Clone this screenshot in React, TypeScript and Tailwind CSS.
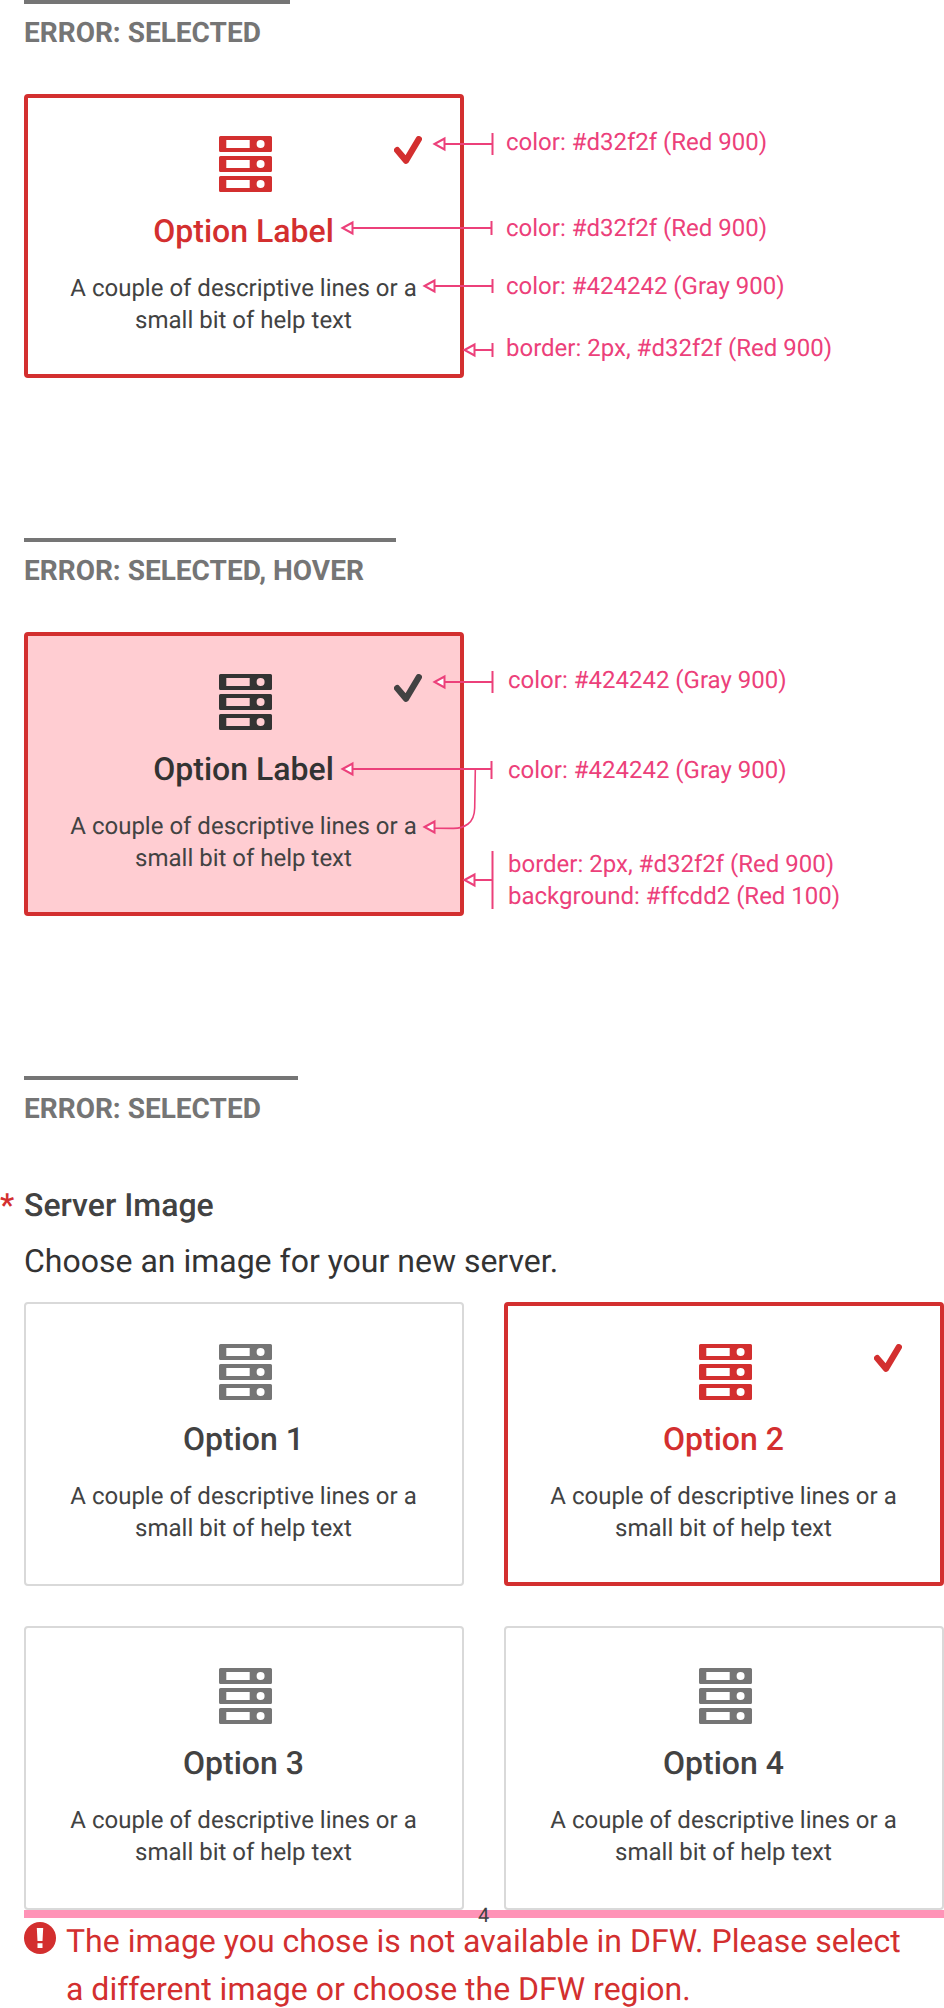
import React from "react";

type Tone = "idle" | "error" | "errorHover";

const PINK = "#ec407a";

const cardTone: Record<Tone, string> = {
  idle: "border-2 border-[#d9d9d9] bg-white p-[2px]",
  error: "border-4 border-[#d32f2f] bg-white",
  errorHover: "border-4 border-[#d32f2f] bg-[#ffcdd2]",
};
const iconTone: Record<Tone, string> = {
  idle: "text-[#757575]",
  error: "text-[#d32f2f]",
  errorHover: "text-[#333333]",
};
const labelTone: Record<Tone, string> = {
  idle: "text-[#424242]",
  error: "text-[#d32f2f]",
  errorHover: "text-[#333333]",
};
const checkTone: Record<Tone, string> = {
  idle: "hidden",
  error: "text-[#d32f2f]",
  errorHover: "text-[#424242]",
};

function ServerIcon({ className }: { className: string }) {
  return (
    <svg width="56" height="56" viewBox="0 0 56 56" fill="currentColor" fillRule="evenodd" className={className}>
      {[0, 20, 40].map((y) => (
        <path
          key={y}
          transform={`translate(0 ${y})`}
          d="M4.5 0H54.5a1.5 1.5 0 0 1 1.5 1.5V14.5a1.5 1.5 0 0 1-1.5 1.5H4.5A1.5 1.5 0 0 1 3 14.5V1.5A1.5 1.5 0 0 1 4.5 0ZM10.3 4V12H33.7V4ZM44.6 4a4 4 0 1 0 0 8a4 4 0 1 0 0-8Z"
        />
      ))}
    </svg>
  );
}

function CheckIcon({ className }: { className: string }) {
  return (
    <svg width="28" height="28" viewBox="0 0 28 28" fill="none" className={className}>
      <path d="M3.2 14.2L12 24.6L24.8 3.2" stroke="currentColor" strokeWidth="6.3" strokeLinecap="round" strokeLinejoin="round" />
    </svg>
  );
}

function OptionCard({ label, tone }: { label: string; tone: Tone }) {
  return (
    <div className={`relative h-[284px] w-[440px] shrink-0 rounded-[4px] ${cardTone[tone]}`}>
      <div className="flex flex-col items-center pt-[38px]">
        <ServerIcon className={iconTone[tone]} />
        <div className={`mt-[19px] pr-px text-[32px] leading-[40px] font-medium ${labelTone[tone]}`}>{label}</div>
        <p className="mt-[21px] pr-px text-center text-2xl leading-8 text-[#424242]">
          A couple of descriptive lines or a
          <br />
          small bit of help text
        </p>
      </div>
      <CheckIcon className={`absolute top-[38px] right-[38px] ${checkTone[tone]}`} />
    </div>
  );
}

function Heading({ text, rule }: { text: string; rule: string }) {
  return (
    <div>
      <div className={`h-1 bg-[#757575] ${rule}`} />
      <h2 className="mt-[13px] text-[28px] leading-8 font-bold text-[#757575]">{text}</h2>
    </div>
  );
}

/* Arrow pointing left at x, with a stem to `end` and a bar from top to bottom. */
function Arrow({ x, y, end, top, bottom }: { x: number; y: number; end: number; top: number; bottom: number }) {
  return (
    <g>
      <path d={`M${x + 12} ${y}H${end}M${end} ${top}V${bottom}`} />
      <path d={`M${x + 2} ${y}L${x + 12} ${y - 5.5}V${y + 5.5}Z`} fill="#fff" />
    </g>
  );
}

function Overlay({ children }: { children: React.ReactNode }) {
  return (
    <svg
      width="520"
      height="284"
      viewBox="24 0 520 284"
      fill="none"
      stroke={PINK}
      strokeWidth="2"
      className="pointer-events-none absolute top-0 left-0"
    >
      {children}
    </svg>
  );
}

function Note({ children, className = "" }: { children: React.ReactNode; className?: string }) {
  return <div className={`text-2xl leading-8 whitespace-nowrap text-[#ec407a] ${className}`}>{children}</div>;
}

export default function App() {
  return (
    <main className="h-[2008px] w-[944px] overflow-hidden bg-white pl-6 font-[Roboto,sans-serif] [text-rendering:geometricPrecision]">
      <section className="h-[538px]">
        <Heading text="ERROR: SELECTED" rule="w-[266px]" />
        <div className="relative mt-[45px] flex">
          <OptionCard label="Option Label" tone="error" />
          <div className="pl-[42px]">
            <Note className="mt-8">color: #d32f2f (Red 900)</Note>
            <Note className="mt-[54px]">color: #d32f2f (Red 900)</Note>
            <Note className="mt-[26px]">color: #424242 (Gray 900)</Note>
            <Note className="mt-[30px]">border: 2px, #d32f2f (Red 900)</Note>
          </div>
          <Overlay>
            <Arrow x={432.5} y={50} end={492.5} top={39} bottom={61} />
            <Arrow x={340.5} y={134} end={491.5} top={127} bottom={141} />
            <Arrow x={422.5} y={192} end={492.5} top={185} bottom={199} />
            <Arrow x={462.5} y={256} end={492.5} top={249} bottom={263} />
          </Overlay>
        </div>
      </section>

      <section className="h-[538px]">
        <Heading text="ERROR: SELECTED, HOVER" rule="w-[372px]" />
        <div className="relative mt-[45px] flex">
          <OptionCard label="Option Label" tone="errorHover" />
          <div className="pl-[44px]">
            <Note className="mt-8">color: #424242 (Gray 900)</Note>
            <Note className="mt-[58px]">color: #424242 (Gray 900)</Note>
            <Note className="mt-[62px]">border: 2px, #d32f2f (Red 900)</Note>
            <Note>background: #ffcdd2 (Red 100)</Note>
          </div>
          <Overlay>
            <path d="M475.3 138L474.7 176Q474.500 187 468 192Q462 196.500 453 196.400L435 196.300" strokeWidth="1.6" />
            <Arrow x={432.5} y={50} end={492.5} top={39} bottom={61} />
            <Arrow x={340.5} y={137} end={491.5} top={129} bottom={147} />
            <Arrow x={422.5} y={195} end={434.5} top={195} bottom={195} />
            <Arrow x={462.5} y={248} end={492.5} top={219} bottom={277} />
          </Overlay>
        </div>
      </section>

      <section>
        <Heading text="ERROR: SELECTED" rule="w-[274px]" />
        <div className="relative mt-[60px] text-[32px] leading-10 font-medium text-[#424242]">
          <span className="absolute top-0 -left-6 text-[#d32f2f]">*</span>
          Server Image
        </div>
        <p className="mt-4 text-[32px] leading-10 text-[#333333]">Choose an image for your new server.</p>
        <div className="mt-[21px] grid grid-cols-[440px_440px] gap-10">
          <OptionCard label="Option 1" tone="idle" />
          <OptionCard label="Option 2" tone="error" />
          <OptionCard label="Option 3" tone="idle" />
          <OptionCard label="Option 4" tone="idle" />
        </div>
        <div className="relative h-2 bg-[#ff93b7]">
          <span className="absolute -top-[7px] left-[454px] text-xl leading-6 text-[#424242]">4</span>
        </div>
        <div className="flex items-start text-[#d32f2f]">
          <svg width="32" height="32" viewBox="0 0 32 32" className="mt-1 shrink-0">
            <circle cx="16" cy="16" r="16" fill="currentColor" />
            <path d="M12.8 6H19.2L18.5 19H13.5ZM13.5 21.3H18.5V26H13.5Z" fill="#fff" />
          </svg>
          <p className="-mt-px pl-[10px] text-[32px] leading-[48px] whitespace-nowrap">
            The image you chose is not available in DFW. Please select
            <br />a different image or choose the DFW region.
          </p>
        </div>
      </section>
    </main>
  );
}
